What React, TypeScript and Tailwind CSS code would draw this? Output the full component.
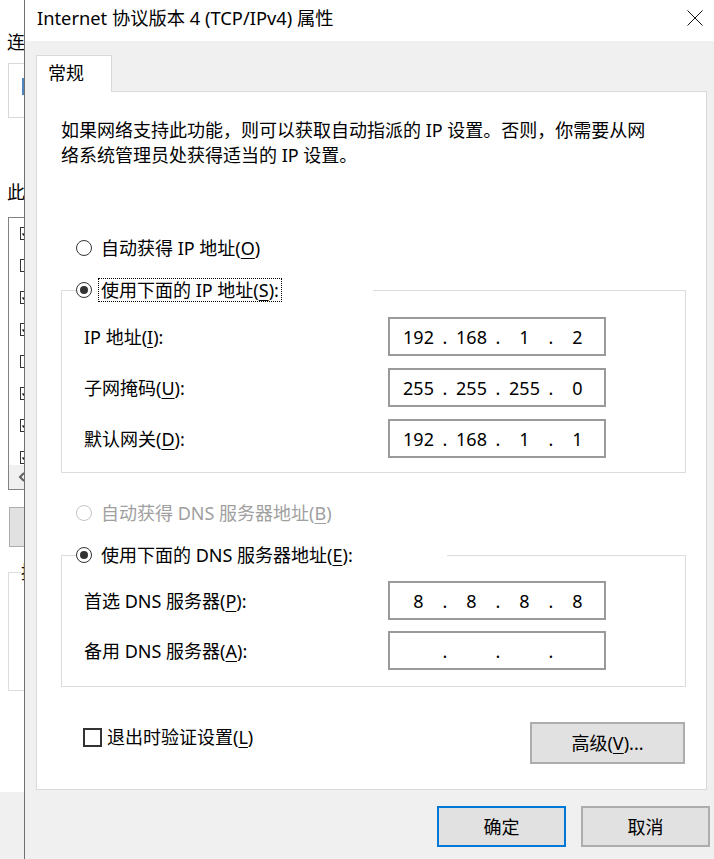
import React from "react"

const Mn = ({ c }: { c: string }) => <span className="underline decoration-1 underline-offset-[3px]">{c}</span>

const Radio = ({ checked, disabled }: { checked?: boolean; disabled?: boolean }) => (
    <span
        className={`flex h-[16px] w-[16px] shrink-0 items-center justify-center rounded-full border-[1.5px] bg-white ${
            disabled ? "border-[#c4c4c4]" : "border-[#333333]"
        }`}
    >
        {checked && <span className="h-[8px] w-[8px] rounded-full bg-[#333333]" />}
    </span>
)

const IpBox = ({ parts }: { parts: string[] }) => (
    <div className="flex h-[39px] w-[218px] shrink-0 items-center border-2 border-[#9a9a9a] bg-white pl-[6px]">
        {parts.map((p, i) => (
            <React.Fragment key={i}>
                {i > 0 && <span className="w-[8px] text-center">.</span>}
                <span className="w-[45px] text-center">{p}</span>
            </React.Fragment>
        ))}
    </div>
)

const FieldRow = ({ label, parts }: { label: React.ReactNode; parts: string[] }) => (
    <div className="flex items-center">
        <div className="w-[304px] whitespace-nowrap">{label}</div>
        <IpBox parts={parts} />
    </div>
)

const StripCheck = ({ checked }: { checked?: boolean }) => (
    <div className="flex h-[13px] w-[13px] items-center justify-center border border-[#333333] bg-white">
        {checked && (
            <svg width="11" height="11" viewBox="0 0 11 11">
                <path d="M1.5 5.5 L4.2 8.2 L9.5 2.5" fill="none" stroke="#222" strokeWidth="1.6" />
            </svg>
        )}
    </div>
)

const BackWindow = () => (
    <div className="flex w-[24px] shrink-0 flex-col overflow-hidden bg-[#f0f0f0]">
        <div className="h-[792px] w-[24px] shrink-0 bg-white">
            <div className="flex w-[120px] flex-col pl-[7px] pt-[30px]">
                <div className="h-[24px] whitespace-nowrap leading-[24px]">连接时使用:</div>
                <div className="ml-[1px] mt-[9px] h-[55px] w-[100px] border border-[#d9d9d9] pl-[13px] pt-[14px]">
                    <div className="h-[17px] w-[14px] bg-[#4f86c0]" />
                </div>
                <div className="mt-[62px] h-[24px] whitespace-nowrap leading-[24px]">此连接使用下列项目:</div>
                <div className="ml-[1px] mt-[13px] flex h-[273px] w-[100px] flex-col border border-[#828282]">
                    <div className="flex flex-col gap-[19px] pl-[11px] pt-[9px]">
                        <StripCheck checked />
                        <StripCheck />
                        <StripCheck checked />
                        <StripCheck checked />
                        <StripCheck />
                        <StripCheck checked />
                        <StripCheck checked />
                        <StripCheck checked />
                    </div>
                    <div className="mt-auto flex h-[24px] items-center bg-[#f0f0f0] pl-[9px]">
                        <svg width="8" height="10" viewBox="0 0 8 10">
                            <path d="M6 1 L2 5 L6 9" fill="none" stroke="#606060" strokeWidth="2" />
                        </svg>
                    </div>
                </div>
                <div className="ml-[2px] mt-[17px] h-[40px] w-[80px] border border-[#adadad] bg-[#e1e1e1]" />
                <fieldset className="ml-[1px] mt-[13px] h-[131px] w-[100px] border border-[#dcdcdc] pl-[12px]">
                    <legend className="h-[24px] whitespace-nowrap leading-[24px]">描述</legend>
                </fieldset>
            </div>
        </div>
    </div>
)

const App = () => {
    return (
        <div className="flex h-[859px] w-[714px] overflow-hidden bg-white font-['Noto_Sans','Noto_Sans_CJK_SC',sans-serif] text-[18px] leading-[24px] text-black">
            <BackWindow />
            <div className="flex min-w-0 flex-1 flex-col border-l border-[#707070]">
                {/* title bar */}
                <div className="flex h-[41px] shrink-0 items-start justify-between bg-white pl-[12px] pr-[11px]">
                    <div className="whitespace-nowrap pt-[6px] text-[18.3px]">Internet 协议版本 4 (TCP/IPv4) 属性</div>
                    <svg className="mt-[10px]" width="16" height="16" viewBox="0 0 16 16">
                        <path d="M0.5 0.5 L15.5 15.5 M15.5 0.5 L0.5 15.5" stroke="#111" strokeWidth="1" />
                    </svg>
                </div>

                <div className="flex flex-1 flex-col bg-[#f0f0f0] pt-[14px]">
                    <div className="relative z-10 -mb-px ml-[11px] h-[37px] w-[76px] border-x border-t border-[#d9d9d9] bg-white pl-[11px] pt-[5px]">
                        常规
                    </div>

                    <div className="ml-[11px] flex w-[671px] flex-col border border-[#d9d9d9] bg-white pb-[25px] pl-[24px] pr-[20px] pt-[26px]">
                        <div className="whitespace-nowrap leading-[25px]">
                            如果网络支持此功能，则可以获取自动指派的 IP 设置。否则，你需要从网
                            <br />
                            络系统管理员处获得适当的 IP 设置。
                        </div>

                        <div className="ml-[15px] mt-[68px] flex h-[24px] items-center">
                            <Radio />
                            <span className="ml-[9px] whitespace-nowrap">
                                自动获得 IP 地址(<Mn c="O" />)
                            </span>
                        </div>

                        <fieldset className="mt-[18px] w-[625px] border border-[#dcdcdc] pb-[14px] pl-[14px]">
                            <legend className="w-[297px]">
                                <div className="flex h-[24px] items-center">
                                    <Radio checked />
                                    <span className="ml-[6px] whitespace-nowrap border border-dotted border-black px-[2px] leading-[22px]">
                                        使用下面的 IP 地址(<Mn c="S" />):
                                    </span>
                                </div>
                            </legend>
                            <div className="ml-[8px] mt-[15px] flex flex-col gap-[12px]">
                                <FieldRow label={<>IP 地址(<Mn c="I" />):</>} parts={["192", "168", "1", "2"]} />
                                <FieldRow label={<>子网掩码(<Mn c="U" />):</>} parts={["255", "255", "255", "0"]} />
                                <FieldRow label={<>默认网关(<Mn c="D" />):</>} parts={["192", "168", "1", "1"]} />
                            </div>
                        </fieldset>

                        <div className="ml-[15px] mt-[28px] flex h-[24px] items-center text-[#a0a0a0]">
                            <Radio disabled />
                            <span className="ml-[9px] whitespace-nowrap">
                                自动获得 DNS 服务器地址(<Mn c="B" />)
                            </span>
                        </div>

                        <fieldset className="mt-[18px] w-[625px] border border-[#dcdcdc] pb-[16px] pl-[14px]">
                            <legend className="w-[371px]">
                                <div className="flex h-[24px] items-center">
                                    <Radio checked />
                                    <span className="ml-[9px] whitespace-nowrap">
                                        使用下面的 DNS 服务器地址(<Mn c="E" />):
                                    </span>
                                </div>
                            </legend>
                            <div className="ml-[8px] mt-[14px] flex flex-col gap-[11px]">
                                <FieldRow label={<>首选 DNS 服务器(<Mn c="P" />):</>} parts={["8", "8", "8", "8"]} />
                                <FieldRow label={<>备用 DNS 服务器(<Mn c="A" />):</>} parts={["", "", "", ""]} />
                            </div>
                        </fieldset>

                        <div className="mt-[35px] flex w-[625px] items-start justify-between pr-[1px]">
                            <div className="ml-[22px] mt-[3px] flex items-center">
                                <span className="h-[19px] w-[19px] border-2 border-[#333333] bg-white" />
                                <span className="ml-[5px] whitespace-nowrap">
                                    退出时验证设置(<Mn c="L" />)
                                </span>
                            </div>
                            <button className="flex h-[42px] w-[155px] items-center justify-center border-2 border-[#adadad] bg-[#e1e1e1]">
                                高级(<Mn c="V" />)...
                            </button>
                        </div>
                    </div>

                    <div className="mt-[16px] flex justify-end gap-[15px] pr-[4px]">
                        <button className="flex h-[41px] w-[129px] items-center justify-center border-2 border-[#0078d7] bg-[#e1e1e1]">
                            确定
                        </button>
                        <button className="flex h-[41px] w-[129px] items-center justify-center border-2 border-[#adadad] bg-[#e1e1e1]">
                            取消
                        </button>
                    </div>
                </div>
            </div>
        </div>
    )
}

export default App
